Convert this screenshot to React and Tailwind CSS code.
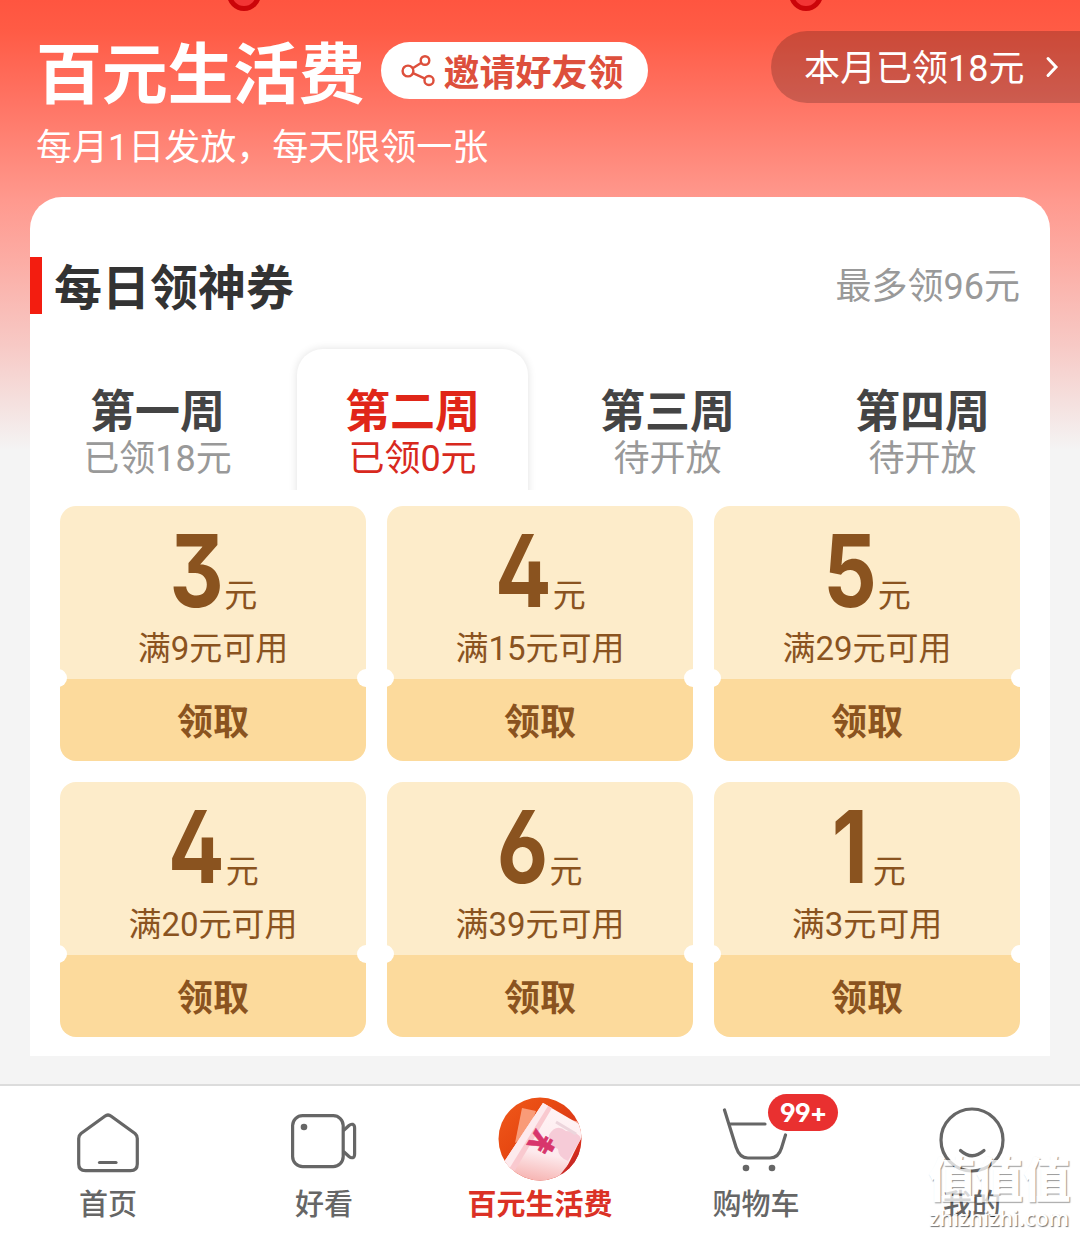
import { clsx } from 'clsx';

const weeks = [
    { name: '第一周', status: '已领18元' },
    { name: '第二周', status: '已领0元', active: true },
    { name: '第三周', status: '待开放' },
    { name: '第四周', status: '待开放' },
];

const coupons = [
    { amount: 3, limit: 9 },
    { amount: 4, limit: 15 },
    { amount: 5, limit: 29 },
    { amount: 4, limit: 20 },
    { amount: 6, limit: 39 },
    { amount: 1, limit: 3 },
];

function ShareIcon() {
    return (
        <svg width="36" height="34" viewBox="0 0 36 34" fill="none" stroke="#dd4f3c" strokeWidth="2.4" className="shrink-0">
            <circle cx="7" cy="17" r="5.4" />
            <circle cx="24" cy="6.5" r="4.3" />
            <circle cx="28" cy="26.5" r="4.5" />
            <path d="M11.7 14.2L20.4 8.8M12 19.2L24 24.6" />
        </svg>
    );
}

function HomeIcon() {
    return (
        <svg width="66" height="64" viewBox="0 0 66 64" fill="none" stroke="#666" strokeWidth="3.2" strokeLinecap="round" strokeLinejoin="round" className="mt-2">
            <path d="M29.8 5.2Q33 2.8 36.2 5.2L60 22.5Q62.3 24.4 62.3 27.5V53Q62.3 59.7 55.5 59.7H10.5Q3.7 59.7 3.7 53V27.5Q3.7 24.4 6 22.5Z" />
            <path d="M24.5 51.5H41" />
        </svg>
    );
}

function VideoIcon() {
    return (
        <svg width="70" height="64" viewBox="0 0 70 64" fill="none" stroke="#666" strokeWidth="3.2" strokeLinejoin="round" className="mt-[5px]">
            <rect x="3.6" y="5.6" width="50.6" height="51" rx="10" />
            <circle cx="15" cy="17" r="3.3" fill="#666" stroke="none" />
            <path d="M54.5 20.5L60 15.5Q62 13.8 64 14.4Q65.6 15 65.6 18V44Q65.6 47 64 47.6Q62 48.2 60 46.5L54.5 41.5" />
        </svg>
    );
}

function CashIcon() {
    return (
        <svg width="84" height="84" viewBox="0 0 84 84">
            <defs>
                <linearGradient id="disc" x1="0" y1="0" x2="1" y2="1">
                    <stop offset="0" stopColor="#f05a1c" />
                    <stop offset="0.35" stopColor="#e84a12" />
                    <stop offset="1" stopColor="#cc1f22" />
                </linearGradient>
                <linearGradient id="note" x1="0.6" y1="0" x2="0.4" y2="1">
                    <stop offset="0" stopColor="#fff4f6" />
                    <stop offset="0.6" stopColor="#fdeaed" />
                    <stop offset="1" stopColor="#f5a9a6" />
                </linearGradient>
                <clipPath id="round">
                    <circle cx="42" cy="42" r="41.5" />
                </clipPath>
            </defs>
            <g clipPath="url(#round)">
                <rect width="84" height="84" fill="url(#disc)" />
                <path d="M24 11L38 14L30 36L17 46Z" fill="#f99b78" />
                <path d="M66 22L84 25V40L70 34Z" fill="#f7a08e" />
                <path d="M45 6L88 31L62 84L40 90L4 68Z" fill="url(#note)" />
                <path d="M45 6L54 11L16 75L4 68Z" fill="#f9c9cf" />
                <path d="M45 6L50 9L11 72L4 68Z" fill="#fdeaed" />
                <path d="M51 38Q58 26 68 34Q80 34 83 42L70 64Q60 60 60 52Q50 48 51 38Z" fill="#f6cbd7" />
                <path d="M58 25L78 37" stroke="#ecd5dc" strokeWidth="3" />
                <path d="M84 50L62 78L74 74L84 62Z" fill="#c92a25" />
                <text x="0" y="13" transform="translate(44 46) rotate(-60)" textAnchor="middle" fontSize="36" fontWeight="700" fill="#d8356c" stroke="#d8356c" strokeWidth="0.6" fontFamily="Roboto, sans-serif">¥</text>
            </g>
        </svg>
    );
}

function CartIcon() {
    return (
        <svg width="72" height="70" viewBox="0 0 72 70" fill="none" stroke="#666" strokeWidth="3.2" strokeLinecap="round">
            <path d="M4.5 6L16 43Q19.500 54 28 54H50Q58.5 54 61.5 44L65.5 31" />
            <path d="M10.5 20H45" />
            <circle cx="26" cy="64" r="3.3" fill="#666" stroke="none" />
            <circle cx="52" cy="64" r="3.3" fill="#666" stroke="none" />
        </svg>
    );
}

function FaceIcon() {
    return (
        <svg width="66" height="66" viewBox="0 0 66 66" fill="none" stroke="#666" strokeWidth="3.2" strokeLinecap="round" className="mt-[2px]">
            <circle cx="33" cy="33" r="31" />
            <path d="M21.5 43.5Q33 54 45 43.5" />
        </svg>
    );
}

function Coupon({ amount, limit }) {
    return (
        <div className="relative h-[255px] rounded-2xl overflow-hidden flex flex-col text-[#8a531f]">
            <div className="h-[173px] shrink-0 bg-[#fdecca] flex flex-col items-center">
                <div className={clsx('flex items-baseline h-[118px] gap-1 leading-[128px]', amount === 1 ? 'pr-[3px]' : 'pr-[10px]')}>
                    <span className={clsx(
                        "font-['Inter'] font-bold text-[101px] tracking-[-0.04em] [font-feature-settings:'cv02','cv03','cv04','cv09'] origin-right scale-x-[0.83]",
                        amount === 1 && 'mr-1'
                    )}>
                        {amount}
                    </span>
                    <span className="text-[33px]">元</span>
                </div>
                <div className="text-[33px] leading-[50px]">满{limit}元可用</div>
            </div>
            <button className="h-[82px] bg-[#fcda9c] text-[36px] font-bold leading-[80px] pt-1">领取</button>
            <i className="absolute -left-[11px] top-[163px] size-[18px] rounded-full bg-white" />
            <i className="absolute -right-[9px] top-[163px] size-[18px] rounded-full bg-white" />
        </div>
    );
}

function NavItem({ icon, label, active, badge }) {
    return (
        <a className="relative flex-1 flex flex-col items-center">
            <div className="h-[94px] flex items-center justify-center pt-3">{icon}</div>
            <span className={clsx('text-[29px] leading-[50px]', active ? 'text-[#db3125] font-bold' : 'text-[#666] font-medium')}>
                {label}
            </span>
            {badge && (
                <span className="absolute left-[120px] top-2 w-[70px] h-[37px] rounded-full bg-[#e93030] text-white text-center text-[26px] leading-[37px] font-bold font-['Inter'] [font-feature-settings:'cv04'] tracking-[-0.04em]">
                    {badge}
                </span>
            )}
        </a>
    );
}

export default function App() {
    return (
        <div className="relative w-[1080px] h-[1236px] overflow-hidden flex flex-col bg-[#f4f4f4] bg-[linear-gradient(180deg,#ff5540_0px,#ff5b45_30px,#ff7363_100px,#ff8678_150px,#ff998e_200px,#fcaca4_260px,#f7c9c5_345px,#f5dfdd_400px,#f4f4f4_450px)] font-['Roboto','Noto_Sans_CJK_SC',sans-serif]">
            {/* Hanging rings */}
            <i className="absolute left-[227px] -top-[23px] size-[34px] rounded-full border-[5px] border-[#cb0509] bg-[#f23535]" />
            <i className="absolute left-[789px] -top-[23px] size-[34px] rounded-full border-[5px] border-[#cb0509] bg-[#f23535]" />

            {/* Header */}
            <header className="h-[197px] shrink-0 text-white">
                <div className="flex items-start h-[123px] pt-[31px] pl-[36px]">
                    <h1 className="text-[66px] leading-[89px] font-bold tracking-[-0.3px]">百元生活费</h1>
                    <button className="mt-[11px] ml-[16px] w-[267px] h-[57px] rounded-full bg-white flex items-center pl-5 gap-[7px] text-[36px] leading-[60px] font-bold text-[#dd4f3c]">
                        <ShareIcon />
                        <span className="pt-[6px]">邀请好友领</span>
                    </button>
                    <div className="ml-auto w-[309px] h-[72px] rounded-l-full bg-black/20 flex items-center pl-[33px] text-[36px]">
                        <span className="pt-[3px]">本月已领18元</span>
                        <svg width="14" height="26" viewBox="0 0 14 26" fill="none" stroke="#fff" strokeWidth="3" strokeLinecap="round" className="ml-[21px]">
                            <path d="M3 4.5L11 13L3 21.5" />
                        </svg>
                    </div>
                </div>
                <p className="pl-9 text-[36px] leading-[50px]">每月1日发放，每天限领一张</p>
            </header>

            {/* Coupon panel */}
            <main className="mx-[30px] h-[859px] shrink-0 rounded-t-[32px] bg-white">
                <div className="pt-[60px] h-[120px] flex items-start pr-[30px]">
                    <div className="w-3 h-[57px] bg-[#f31d10]" />
                    <h2 className="ml-3 text-[48px] leading-[63px] font-bold text-[#333]">每日领神券</h2>
                    <span className="ml-auto text-[36px] leading-[60px] text-[#999]">最多领96元</span>
                </div>

                <div className="mt-[20px] h-[153px] pt-[12px] flex overflow-hidden">
                    {weeks.map((week) => (
                        <div key={week.name} className="flex-1 px-[12px]">
                            <div className={clsx(
                                'h-[160px] pt-[35px] flex flex-col items-center rounded-t-[26px]',
                                week.active ? 'text-[#e02618] shadow-[0_0_9px_rgba(0,0,0,0.12)]' : 'text-[#444]'
                            )}>
                                <span className="text-[45px] leading-[57px] font-bold">{week.name}</span>
                                <span className={clsx('text-[36px] leading-[36px]', week.active ? 'text-[#d8291e]' : 'text-[#999]')}>
                                    {week.status}
                                </span>
                            </div>
                        </div>
                    ))}
                </div>

                <div className="mt-4 px-[30px] grid grid-cols-3 gap-[21px]">
                    {coupons.map((coupon, i) => (
                        <Coupon key={i} {...coupon} />
                    ))}
                </div>
            </main>

            {/* Tab bar */}
            <nav className="mt-7 h-[152px] shrink-0 border-t-2 border-[#dcdcdc] bg-white flex">
                <NavItem icon={<HomeIcon />} label="首页" />
                <NavItem icon={<VideoIcon />} label="好看" />
                <NavItem icon={<CashIcon />} label="百元生活费" active />
                <NavItem icon={<CartIcon />} label="购物车" badge="99+" />
                <NavItem icon={<FaceIcon />} label="我的" />
            </nav>

            {/* Watermark */}
            <div className="absolute left-[928px] top-[1154px] w-[146px] text-white pointer-events-none">
                <div className="text-[47.5px] leading-[54px] font-black opacity-75 [text-shadow:1px_1px_1px_rgba(0,0,0,0.55)]">值值值</div>
                <div className="pl-px text-[21.5px] leading-[20px] font-semibold font-['Open_Sans'] opacity-90 [text-shadow:1px_1px_1px_rgba(0,0,0,0.6)]">zhizhizhi.com</div>
            </div>
        </div>
    );
}
